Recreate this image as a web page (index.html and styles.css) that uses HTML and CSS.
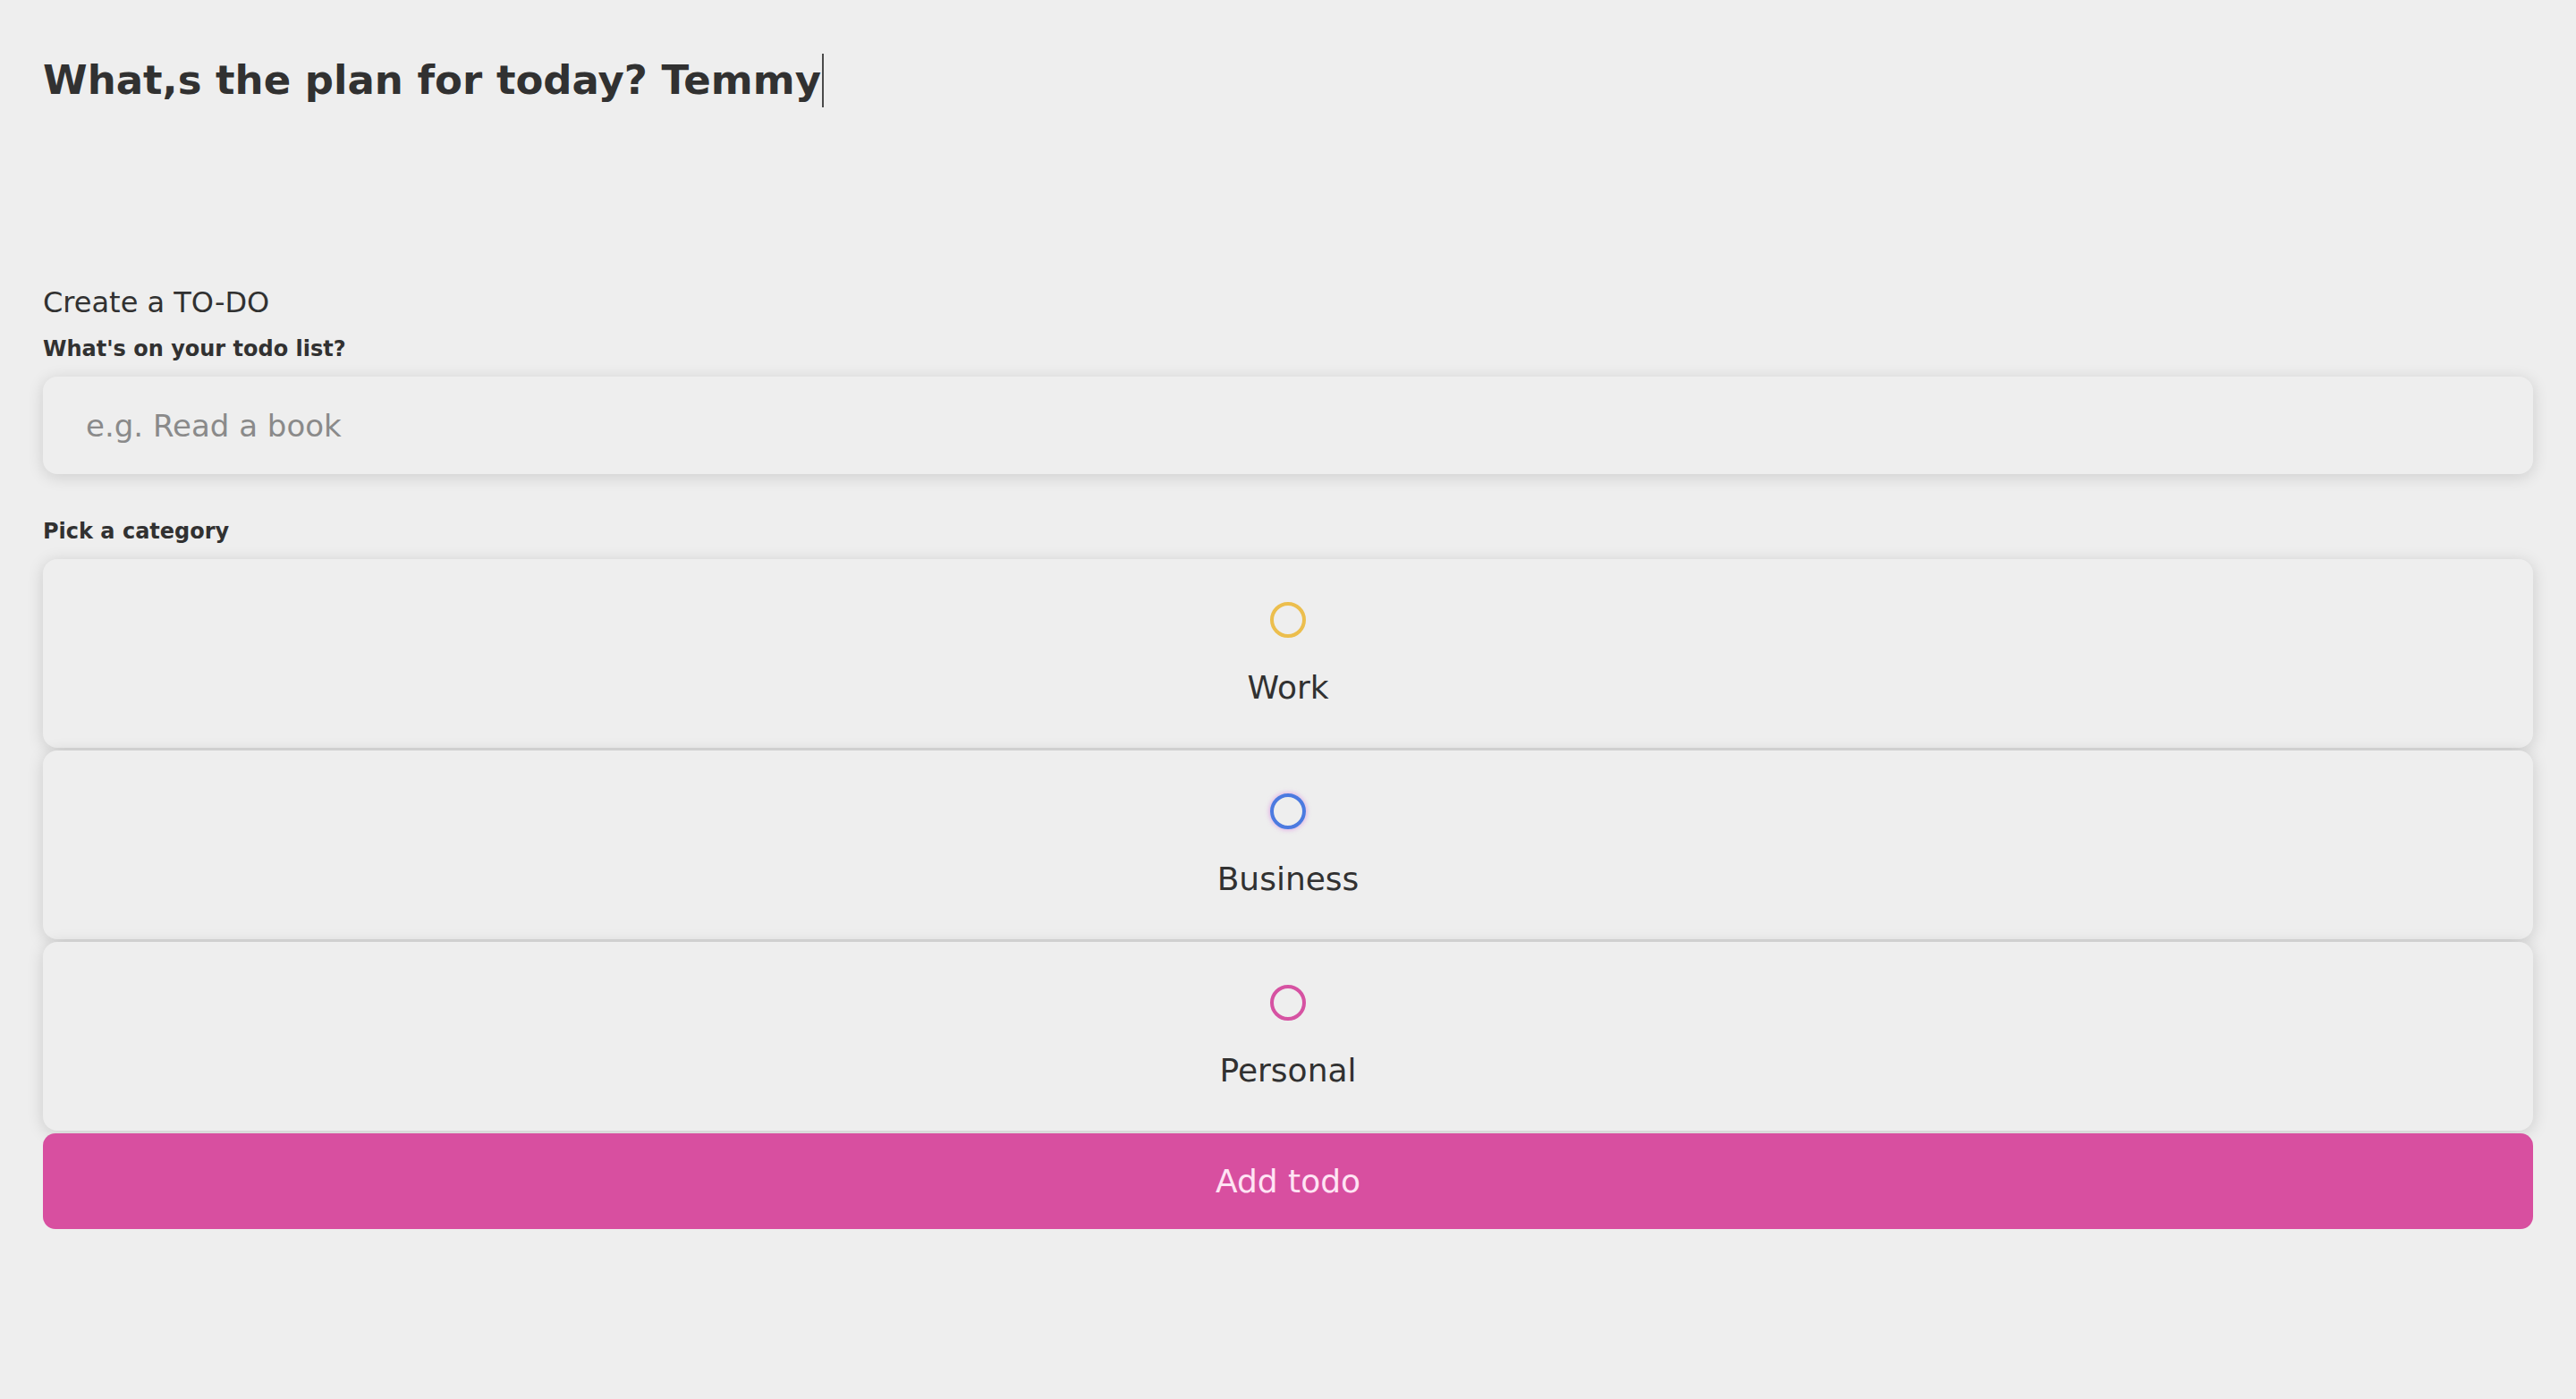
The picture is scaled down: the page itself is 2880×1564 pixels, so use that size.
FILE: index.html
```html
<!DOCTYPE html>
<html lang="en">
<head>
<meta charset="utf-8">
<title>Todo</title>
<link rel="stylesheet" href="styles.css">
</head>
<body>
<main class="app">
  <h1 class="greeting">What,s the plan for today? Temmy<span class="caret"></span></h1>
  <section class="create">
    <h2 class="create-title">Create a TO-DO</h2>
    <form class="form">
      <label class="label" for="todo">What's on your todo list?</label>
      <input class="input" id="todo" type="text" placeholder="e.g. Read a book">
      <p class="label label-cat">Pick a category</p>
      <div class="options">
        <label class="option">
          <span class="bubble bubble-work"></span>
          <span class="option-text">Work</span>
        </label>
        <label class="option">
          <span class="bubble bubble-business"></span>
          <span class="option-text">Business</span>
        </label>
        <label class="option">
          <span class="bubble bubble-personal"></span>
          <span class="option-text">Personal</span>
        </label>
      </div>
      <button class="submit" type="button">Add todo</button>
    </form>
  </section>
</main>
</body>
</html>
```
FILE: styles.css
```css
* { box-sizing: border-box; }
html, body {
  margin: 0;
  background: #eeeeee;
  color: #313131;
  font-family: "DejaVu Sans", "Noto Sans", sans-serif;
}
.app {
  padding: 0 48px;
}
.greeting {
  margin: 60px 0 0;
  font-size: 45px;
  line-height: 60px;
  font-weight: 700;
  color: #313131;
  display: flex;
  align-items: center;
}
.caret {
  display: inline-block;
  width: 2px;
  height: 60px;
  background: #4a4a4a;
  margin-left: 1px;
}
.create {
  margin-top: 198px;
}
.create-title {
  margin: 0;
  font-size: 32px;
  line-height: 40px;
  font-weight: 400;
  color: #313131;
}
.form {
  display: flex;
  flex-direction: column;
}
.label {
  margin: 17px 0 0;
  font-size: 24px;
  line-height: 30px;
  font-weight: 700;
  color: #313131;
}
.input {
  margin-top: 16px;
  height: 109px;
  width: 100%;
  border: none;
  border-radius: 16px;
  background: #eeeeee;
  padding: 0 48px;
  font-family: inherit;
  font-size: 34px;
  color: #313131;
  box-shadow: 0 3px 18px rgba(0, 0, 0, 0.14);
  outline: none;
}
.input::placeholder { color: #8a8a8a; }
.label-cat {
  margin-top: 49px;
}
.options {
  margin-top: 16px;
  display: flex;
  flex-direction: column;
  gap: 3px;
}
.option {
  height: 211px;
  border-radius: 16px;
  background: #eeeeee;
  box-shadow: 0 3px 18px rgba(0, 0, 0, 0.15);
  display: flex;
  flex-direction: column;
  align-items: center;
  padding-top: 48px;
}
.bubble {
  width: 40px;
  height: 40px;
  border-radius: 50%;
  border: 4px solid #eabd4c;
}
.bubble-work { border-color: #ecbe4d; }
.bubble-business {
  border-color: #4c7ae0;
  box-shadow: 0 0 5px 1px rgba(214, 120, 220, 0.55);
}
.bubble-personal { border-color: #d652a2; }
.option-text {
  margin-top: 34px;
  font-size: 36px;
  line-height: 44px;
  color: #313131;
}
.submit {
  margin-top: 3px;
  height: 107px;
  width: 100%;
  border: none;
  border-radius: 14px;
  background: #d84fa0;
  color: #ffe4f4;
  font-family: inherit;
  font-size: 36px;
}
```
